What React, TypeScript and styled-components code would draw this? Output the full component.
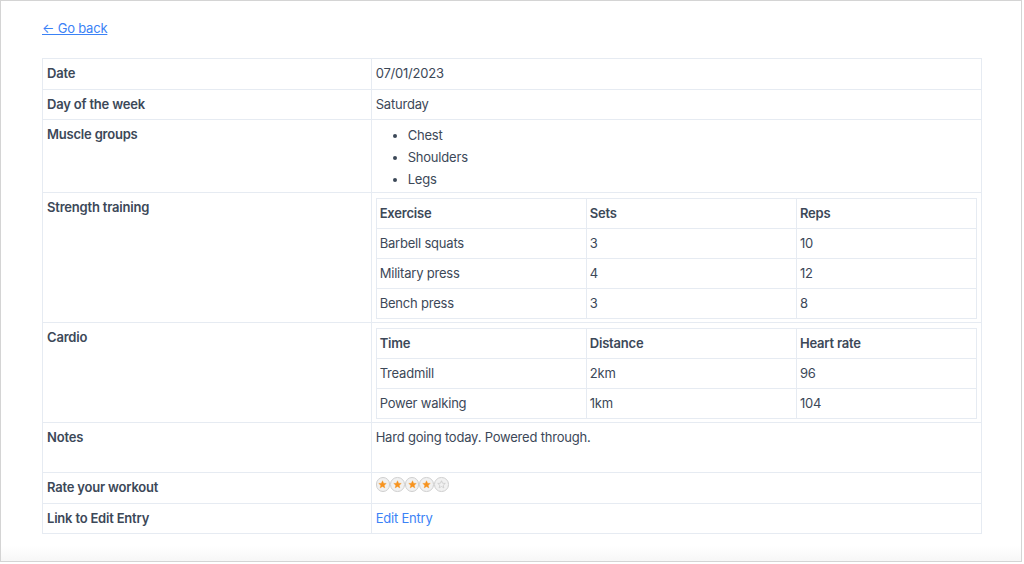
import React from "react";
import styled, { createGlobalStyle } from "styled-components";

const Global = createGlobalStyle`
  html, body { margin: 0; padding: 0; background: #fff; }
  body { font-family: Inter, "Noto Sans", "Liberation Sans", sans-serif; }
  * { box-sizing: border-box; }
`;

const Frame = styled.div`
  width: 1022px;
  height: 562px;
  border: 1px solid #d4d4d4;
  background: linear-gradient(to bottom, #fff 0, #fff 545px, #f6f6f6 561px);
  padding: 18px 41px 0 41px;
  color: #3c4858;
  font-size: 13px;
  letter-spacing: -0.2px;
`;

const BackLink = styled.a`
  display: inline-block;
  color: #3b82f6;
  text-decoration: underline;
  line-height: 18px;
  font-size: 13px;
  margin-bottom: 21px;
`;

const Table = styled.table`
  width: 940px;
  border-collapse: collapse;
  table-layout: fixed;
  border: 1px solid #e6ebf2;
`;

const Label = styled.th`
  width: 35%;
  text-align: left;
  vertical-align: top;
  font-weight: 600;
  padding: 5px 4px 5px 4px;
  line-height: 19.5px;
  border: 1px solid #e6ebf2;
`;

const Value = styled.td<{ $tall?: boolean }>`
  vertical-align: top;
  padding: 5px 4px 5px 4px;
  line-height: 19.5px;
  border: 1px solid #e6ebf2;
  height: ${(p) => (p.$tall ? "50px" : "auto")};
`;

const List = styled.ul`
  margin: 0;
  padding-left: 32px;
  line-height: 22px;
  margin-top: -1px;
  margin-bottom: -3px;
`;

const InnerTable = styled.table`
  width: 100%;
  border-collapse: collapse;
  table-layout: fixed;
  border: 1px solid #e6ebf2;
  margin-bottom: -2px;
`;

const InnerHead = styled.th<{ $w: string }>`
  width: ${(p) => p.$w};
  text-align: left;
  font-weight: 600;
  padding: 5px 3px;
  line-height: 19px;
  border: 1px solid #e6ebf2;
`;

const InnerCell = styled.td`
  padding: 5px 3px;
  line-height: 19px;
  border: 1px solid #e6ebf2;
`;

const Stars = styled.div`
  display: flex;
  margin-top: -1px;
`;

const StarDot = styled.span`
  width: 14.6px;
  height: 14.6px;
  border-radius: 50%;
  border: 1px solid #cfcfcf;
  background: #f1f1f1;
  display: flex;
  align-items: center;
  justify-content: center;
`;

const EditLink = styled.a`
  color: #3b82f6;
  text-decoration: none;
`;

const Star = ({ on }: { on: boolean }) => (
  <StarDot>
    <svg width="9" height="9" viewBox="0 0 24 24">
      <path
        d="M12 2l2.9 6.6 7.1.6-5.4 4.7 1.6 7.1L12 17.3 5.8 21l1.6-7.1L2 9.2l7.1-.6z"
        fill={on ? "#f7931e" : "none"}
        stroke={on ? "#f7931e" : "#c9c9c9"}
        strokeWidth={on ? 1 : 2}
        strokeLinejoin="round"
      />
    </svg>
  </StarDot>
);

const widths = ["35%", "35%", "30%"];

const Sub = ({ head, rows }: { head: string[]; rows: string[][] }) => (
  <InnerTable>
    <thead>
      <tr>
        {head.map((h, i) => (
          <InnerHead key={h} $w={widths[i]}>
            {h}
          </InnerHead>
        ))}
      </tr>
    </thead>
    <tbody>
      {rows.map((r) => (
        <tr key={r[0]}>
          {r.map((c, i) => (
            <InnerCell key={i}>{c}</InnerCell>
          ))}
        </tr>
      ))}
    </tbody>
  </InnerTable>
);

export default function App() {
  return (
    <>
      <Global />
      <Frame>
        <BackLink href="#">← Go back</BackLink>
        <Table>
          <tbody>
            <tr>
              <Label>Date</Label>
              <Value>07/01/2023</Value>
            </tr>
            <tr>
              <Label>Day of the week</Label>
              <Value>Saturday</Value>
            </tr>
            <tr>
              <Label>Muscle groups</Label>
              <Value>
                <List>
                  <li>Chest</li>
                  <li>Shoulders</li>
                  <li>Legs</li>
                </List>
              </Value>
            </tr>
            <tr>
              <Label>Strength training</Label>
              <Value>
                <Sub
                  head={["Exercise", "Sets", "Reps"]}
                  rows={[
                    ["Barbell squats", "3", "10"],
                    ["Military press", "4", "12"],
                    ["Bench press", "3", "8"],
                  ]}
                />
              </Value>
            </tr>
            <tr>
              <Label>Cardio</Label>
              <Value>
                <Sub
                  head={["Time", "Distance", "Heart rate"]}
                  rows={[
                    ["Treadmill", "2km", "96"],
                    ["Power walking", "1km", "104"],
                  ]}
                />
              </Value>
            </tr>
            <tr>
              <Label>Notes</Label>
              <Value $tall>Hard going today. Powered through.</Value>
            </tr>
            <tr>
              <Label>Rate your workout</Label>
              <Value>
                <Stars>
                  <Star on />
                  <Star on />
                  <Star on />
                  <Star on />
                  <Star on={false} />
                </Stars>
              </Value>
            </tr>
            <tr>
              <Label>Link to Edit Entry</Label>
              <Value>
                <EditLink href="#">Edit Entry</EditLink>
              </Value>
            </tr>
          </tbody>
        </Table>
      </Frame>
    </>
  );
}
